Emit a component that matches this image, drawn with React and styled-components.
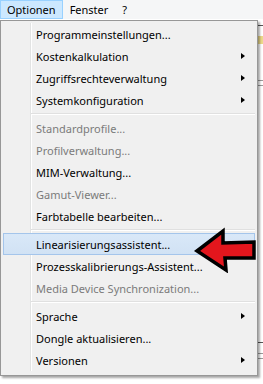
import React from "react";
import styled, { createGlobalStyle } from "styled-components";

const GlobalStyle = createGlobalStyle`
  html, body {
    margin: 0;
    padding: 0;
    background: #ffffff;
  }
  body {
    font-family: "Noto Sans", "Open Sans", sans-serif;
    font-size: 11px;
    color: #000;
  }
`;

const menuGroups = [
  [
    { label: "Programmeinstellungen..." },
    { label: "Kostenkalkulation", sub: true },
    { label: "Zugriffsrechteverwaltung", sub: true },
    { label: "Systemkonfiguration", sub: true },
  ],
  [
    { label: "Standardprofile...", disabled: true },
    { label: "Profilverwaltung...", disabled: true },
    { label: "MIM-Verwaltung..." },
    { label: "Gamut-Viewer...", disabled: true },
    { label: "Farbtabelle bearbeiten..." },
  ],
  [
    { label: "Linearisierungsassistent...", active: true },
    { label: "Prozesskalibrierungs-Assistent..." },
    { label: "Media Device Synchronization...", disabled: true },
  ],
  [
    { label: "Sprache", sub: true },
    { label: "Dongle aktualisieren..." },
    { label: "Versionen", sub: true },
  ],
];

const Screen = styled.div`
  width: 263px;
  height: 384px;
  overflow: hidden;
  background: #ffffff;
`;

const MenuBar = styled.div`
  display: flex;
  height: 19px;
  background: #f5f6f7;
  border-bottom: 1px solid #ffffff;
`;

const BarItem = styled.div`
  height: 19px;
  line-height: 18px;
  padding: 0 6px;
  box-sizing: border-box;
  border: 1px solid ${(p) => (p.$open ? "#99d1ff" : "transparent")};
  background: ${(p) => (p.$open ? "#cce8ff" : "transparent")};
  white-space: nowrap;
`;

const Workspace = styled.div`
  position: relative;
  height: 364px;
  background: #ffffff;
`;

const Backdrop = styled.div`
  display: flex;
  flex-direction: column;
  align-items: flex-end;
  padding-top: 5px;
`;

const BackRule = styled.div`
  width: 8px;
  height: 1px;
  margin-top: ${(p) => p.$gap}px;
  background: ${(p) => p.$color || "#9a9a9a"};
`;

const BackIcon = styled.div`
  width: 6px;
  height: 8px;
  margin-top: 10px;
  background: #ecd98a;
  border-left: 1px solid #8a7a3a;
`;

const Popup = styled.div`
  position: absolute;
  top: 0;
  left: 0;
  width: 258px;
  box-sizing: border-box;
  padding: 2px 2px 4px;
  background: #f0f0f0;
  border: 1px solid #979797;
  box-shadow: 2px 2px 2px rgba(0, 0, 0, 0.35);
`;

const ItemList = styled.div`
  display: flex;
  flex-direction: column;
  background: linear-gradient(
    to right,
    #f0f0f0 27px,
    #e2e3e3 27px 28px,
    #ffffff 28px 29px,
    #f0f0f0 29px
  );
`;

const Item = styled.div`
  display: flex;
  align-items: center;
  height: 22px;
  box-sizing: border-box;
  padding: 0 9px 0 32px;
  border: 1px solid ${(p) => (p.$active ? "#a4c5eb" : "transparent")};
  background: ${(p) =>
    p.$active ? "linear-gradient(#d9e8f8, #d1e2f4)" : "transparent"};
  color: ${(p) => (p.$disabled ? "#7b7b7b" : "#000000")};
  white-space: nowrap;
`;

const Label = styled.span`
  flex: 1;
  padding-top: 1px;
`;

const SubArrow = styled.span`
  width: 0;
  height: 0;
  border-top: 3.5px solid transparent;
  border-bottom: 3.5px solid transparent;
  border-left: 4px solid #000;
`;

const Separator = styled.div`
  height: 6px;
  display: flex;
  flex-direction: column;
  justify-content: center;
  padding-left: 28px;

  &::before {
    content: "";
    height: 1px;
    background: #e0e0e0;
  }
  &::after {
    content: "";
    height: 1px;
    background: #ffffff;
  }
`;

const Pointer = styled.svg`
  position: absolute;
  left: 193px;
  top: 207px;
`;

const RedArrow = () => (
  <Pointer width="66" height="46" viewBox="0 0 66 46">
    <polygon
      points="4,24 30,4 30,16 61,15 61,31 32,31 33,43"
      fill="#e3161d"
      stroke="#000"
      strokeWidth="3.5"
      strokeLinejoin="miter"
    />
  </Pointer>
);

export default function App() {
  return (
    <Screen>
      <GlobalStyle />
      <MenuBar>
        <BarItem $open>Optionen</BarItem>
        <BarItem>Fenster</BarItem>
        <BarItem>?</BarItem>
      </MenuBar>
      <Workspace>
        <Backdrop>
          <BackRule $gap={0} $color="#555" />
          <BackIcon />
          <BackRule $gap={36} />
          <BackRule $gap={4} />
          <BackRule $gap={256} $color="#555" />
          <BackRule $gap={10} />
          <BackRule $gap={4} />
        </Backdrop>
        <Popup>
          <ItemList>
            {menuGroups.map((group, gi) => (
              <React.Fragment key={gi}>
                {gi > 0 && <Separator />}
                {group.map((it) => (
                  <Item
                    key={it.label}
                    $active={it.active}
                    $disabled={it.disabled}
                  >
                    <Label>{it.label}</Label>
                    {it.sub && <SubArrow />}
                  </Item>
                ))}
              </React.Fragment>
            ))}
          </ItemList>
        </Popup>
        <RedArrow />
      </Workspace>
    </Screen>
  );
}
